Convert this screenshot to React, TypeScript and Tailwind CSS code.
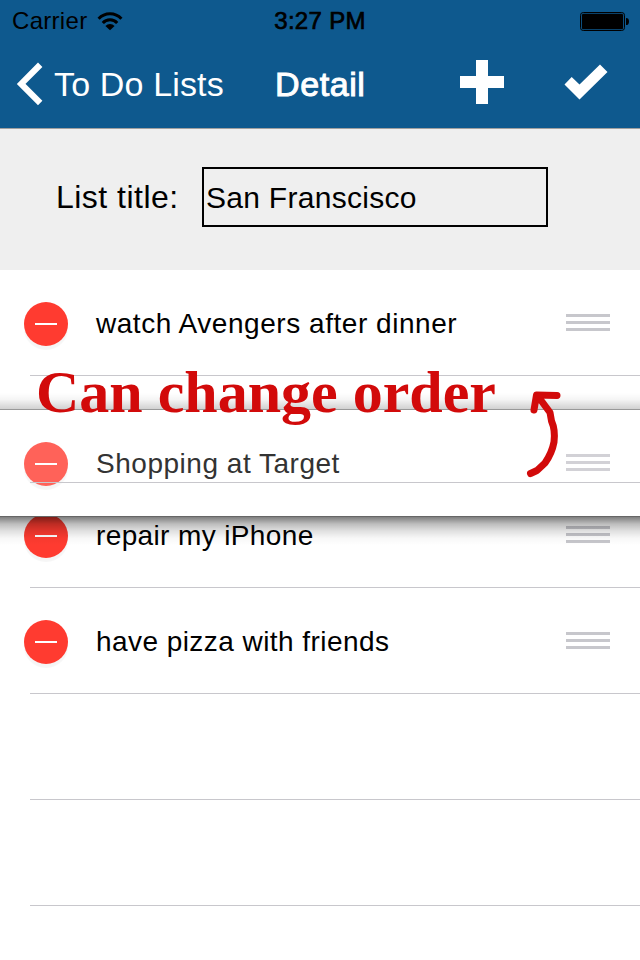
import React from "react";

const sans = "font-['Liberation_Sans',Arial,sans-serif]";

function DeleteButton({ faded = false }: { faded?: boolean }) {
  return (
    <div
      className={`mt-[2px] flex size-11 shrink-0 items-center justify-center rounded-full shadow-[0_4px_1px_rgba(0,0,0,0.04)] ${
        faded ? "bg-[#ff6259]" : "bg-[#ff3b30]"
      }`}
    >
      <div className="h-[2px] w-[22px] bg-white" />
    </div>
  );
}

function Grip({ faded = false }: { faded?: boolean }) {
  const bar = faded ? "h-[3px] bg-[#d2d1d6]" : "h-[3px] bg-[#c7c7cc]";
  return (
    <div className="-mt-px ml-auto mr-[30px] flex w-11 flex-col gap-1">
      <div className={bar} />
      <div className={bar} />
      <div className={bar} />
    </div>
  );
}

function Row({ text, tracking = "" }: { text?: string; tracking?: string }) {
  return (
    <div className="relative flex h-[106px] items-center pl-6">
      {text && (
        <>
          <DeleteButton />
          <span className={`ml-7 mt-[2px] whitespace-nowrap text-[28px] leading-none ${tracking}`}>{text}</span>
          <Grip />
        </>
      )}
      <div className="absolute bottom-0 left-[30px] right-0 h-px bg-[#c8c7cc]" />
    </div>
  );
}

export default function App() {
  return (
    <div className={`relative h-[960px] w-[640px] overflow-hidden bg-white text-black ${sans}`}>
      <header className="h-[129px] border-b border-[#a0a0a0] bg-[#0e598e]">
        <div className="grid h-10 grid-cols-3 items-center text-[24px] leading-[42px]">
          <div className="flex items-center gap-[10px] pl-[12px]">
            <span className="tracking-[0.3px]">Carrier</span>
            <svg width="26" height="20" viewBox="0 0 26 20">
              <g fill="none" stroke="#000" strokeWidth="3">
                <path d="M1.6 7.8 A15.4 15.4 0 0 1 24.4 7.8" />
                <path d="M5.8 12 A9.6 9.6 0 0 1 20.2 12" />
              </g>
              <path d="M8.4 14.9 A6.4 6.4 0 0 1 17.6 14.9 L13 19.2Z" />
            </svg>
          </div>
          <span className="text-center tracking-[0.3px] [-webkit-text-stroke:0.7px_#000]">3:27 PM</span>
          <div className="flex justify-end pr-[10px]">
            <svg width="50" height="20" viewBox="0 0 50 20">
              <rect x="0.5" y="1.5" width="44" height="18" rx="2.8" fill="none" stroke="#000" />
              <rect x="1.9" y="2.8" width="41.2" height="15.4" rx="1.5" />
              <path d="M46 7 Q49 7 49 10.4 Q49 14 46 14Z" />
            </svg>
          </div>
        </div>
        <div className="flex h-[88px] items-center text-[34px] leading-none text-white">
          <svg width="28" height="44" viewBox="0 0 28 44" className="ml-4">
            <path d="M24.2 2.8 L5.2 21.9 L24.2 41" fill="none" stroke="#fff" strokeWidth="6.2" />
          </svg>
          <span className="ml-[10px] w-[221px] whitespace-nowrap tracking-[0.15px]">To Do Lists</span>
          <span className="w-[185px] tracking-[0.6px] [-webkit-text-stroke:1px_#fff]">Detail</span>
          <svg width="44" height="44" viewBox="0 0 44 44" className="-mt-1">
            <path d="M16 0h12v16h16v12H28v16H16V28H0V16h16z" fill="#fff" />
          </svg>
          <svg width="44" height="36" viewBox="0 0 44 36" className="-mt-1 ml-[60px]">
            <path d="M0.5 20.5 L7.7 13 L15.5 20.5 L36 0.5 L43.5 8 L15.5 35.5Z" fill="#fff" />
          </svg>
        </div>
      </header>

      <section className="flex h-[141px] items-start bg-[#efefef] pl-14 pt-[38px]">
        <label className="w-[146px] whitespace-nowrap text-[32px] leading-[60px] tracking-[0.48px]">List title:</label>
        <div className="h-[60px] w-[346px] whitespace-nowrap border-2 border-black pl-[2px] text-[30px] leading-[58px] tracking-[0.28px]">
          San Franscisco
        </div>
      </section>

      <main>
        <Row text="watch Avengers after dinner" tracking="tracking-[0.54px]" />
        <Row />
        <Row text="repair my iPhone" tracking="tracking-[0.37px]" />
        <Row text="have pizza with friends" tracking="tracking-[0.44px]" />
        <Row />
        <Row />
      </main>

      {/* Row being dragged, lifted over the list */}
      <div className="absolute inset-x-0 top-[393px]">
        <div className="h-4 bg-[linear-gradient(to_bottom,transparent,rgba(0,0,0,.04)_40%,rgba(0,0,0,.18))]" />
        <div className="relative flex h-[108px] items-center border-y border-t-[#999] border-b-[#666] bg-white pl-6">
          <DeleteButton faded />
          <span className="ml-7 mt-[2px] whitespace-nowrap text-[28px] leading-none tracking-[0.52px] text-[#333]">
            Shopping at Target
          </span>
          <Grip faded />
          <div className="absolute left-[30px] right-0 top-[72px] h-px bg-[#c8c7cc]" />
        </div>
        <div className="h-7 bg-[linear-gradient(to_bottom,rgba(0,0,0,.5),rgba(0,0,0,.26)_25%,rgba(0,0,0,.12)_50%,rgba(0,0,0,.03)_75%,transparent)]" />
      </div>

      {/* Annotation */}
      <div className="absolute left-[36px] top-[362px] whitespace-nowrap font-['Liberation_Serif',serif] text-[60px] font-bold leading-[60px] text-[#d20a0a]">
        Can change order
      </div>
      <svg className="absolute left-[520px] top-[380px]" width="50" height="106" viewBox="0 0 50 106">
        <g fill="none" stroke="#d20a0a" strokeWidth="7" strokeLinecap="round" strokeLinejoin="round">
          <path d="M10.5 93.5 L17 90.5 L25 83 Q32 73 34 62 Q35.5 50 31.5 41 L30 32.5 L20 19" />
          <path d="M14 30 L16.5 15 L37 15.5" />
          <path d="M17 15 L18 22 L24 16Z" fill="#d20a0a" strokeWidth="3" />
        </g>
      </svg>
    </div>
  );
}
